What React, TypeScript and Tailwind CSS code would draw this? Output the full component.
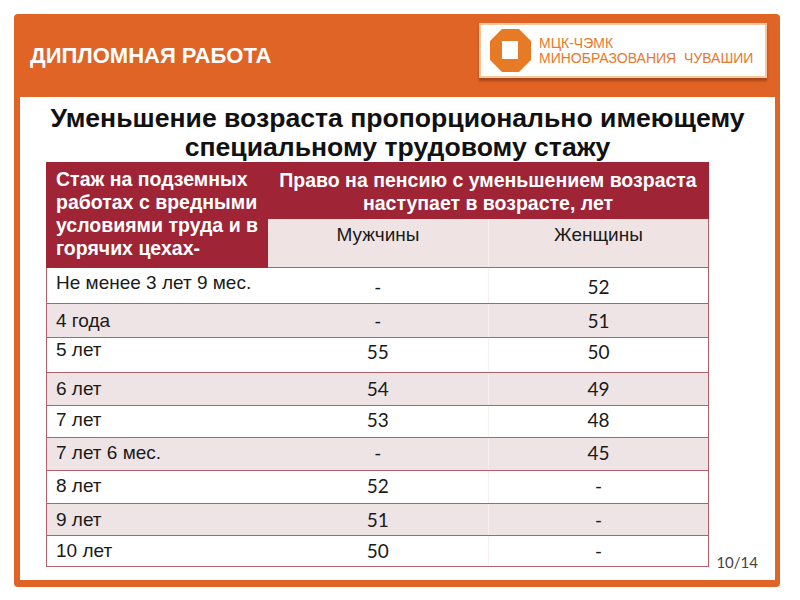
const rows: [string, string, string][] = [
  ["Не менее 3 лет 9 мес.", "-", "52"],
  ["4 года", "-", "51"],
  ["5 лет", "55", "50"],
  ["6 лет", "54", "49"],
  ["7 лет", "53", "48"],
  ["7 лет 6 мес.", "-", "45"],
  ["8 лет", "52", "-"],
  ["9 лет", "51", "-"],
  ["10 лет", "50", "-"],
];

const rowHeights = ["h-[36px]", "h-[34px]", "h-[35px]", "h-[33px]", "h-[32px]", "h-[33px]", "h-[33px]", "h-[32px]", "h-[31px]"];

// per-row vertical placement: [label cell, value cells]
const rowAlign: [string, string][] = [
  ["align-top pt-[4px]", "align-top pt-[8px]"],
  ["align-middle", "align-middle"],
  ["align-top pt-[1px]", "align-top pt-[3px]"],
  ["align-middle", "align-middle"],
  ["align-middle pb-[4px]", "align-middle pb-[4px]"],
  ["align-middle pb-[3px]", "align-middle pb-[3px]"],
  ["align-middle pb-[3px]", "align-middle pb-[3px]"],
  ["align-middle", "align-middle"],
  ["align-middle", "align-middle"],
];

function Logo() {
  return (
    <div className="mt-[9px] mr-[8px] flex h-[55px] w-[288px] items-center gap-[8px] border-2 border-[#f7c89c] bg-white pl-[9px] shadow-[0_3px_2px_#a9461a]">
      <svg width="41" height="43" viewBox="0 0 41 43">
        <polygon points="12,0 29,0 41,12 41,31 29,43 12,43 0,31 0,12" fill="#e77a24" />
        <rect x="12" y="12" width="16" height="18" fill="#fff" />
      </svg>
      <div className="font-['Liberation_Sans',sans-serif] text-[14px] leading-[15px] text-[#e7792a]">
        <div>МЦК-ЧЭМК</div>
        <div>МИНОБРАЗОВАНИЯ&nbsp;&nbsp;ЧУВАШИИ</div>
      </div>
    </div>
  );
}

export default function App() {
  return (
    <div className="h-[600px] w-[800px] bg-white pt-[14px] pl-[14px] font-['Liberation_Sans',Arial,sans-serif]">
      <div className="flex h-[573px] w-[766px] flex-col rounded-[4px] bg-[#df6426] pb-[7px] pl-[6px] pr-[5px]">
        <div className="flex h-[83px] shrink-0 items-start justify-between">
          <div className="mt-[29px] pl-[10px] text-[22px] font-bold leading-[26px] text-white">ДИПЛОМНАЯ РАБОТА</div>
          <Logo />
        </div>
        <div className="relative flex flex-1 flex-col bg-white">
          <h1 className="mt-[7px] text-center text-[26.6px] font-bold leading-[29px] text-[#111]">
            Уменьшение возраста пропорционально имеющему
            <br />
            специальному трудовому стажу
          </h1>
          <table className="ml-[26px] w-[662px] table-fixed border-collapse text-[#1a1a1a]">
            <colgroup>
              <col className="w-[221px]" />
              <col className="w-[221px]" />
              <col className="w-[220px]" />
            </colgroup>
            <thead>
              <tr className="h-[56px]">
                <th rowSpan={2} className="border border-[#9e2436] bg-[#9e2436] pl-[9px] pr-[4px] pb-[2px] text-left align-middle text-[19.5px] font-bold leading-[23px] text-white">
                  Стаж на подземных работах с вредными условиями труда и в горячих цехах-
                </th>
                <th colSpan={2} className="border border-[#9e2436] bg-[#9e2436] px-[4px] pt-[6px] text-center align-top text-[19.5px] font-bold leading-[23px] text-white">
                  Право на пенсию с уменьшением возраста наступает в возрасте, лет
                </th>
              </tr>
              <tr className="h-[49px]">
                <th className="border-b border-b-[#b3606b] border-r border-r-[#f8f0f0] bg-[#efe3e4] pt-[5px] align-top text-[19px] font-normal leading-[22px]">Мужчины</th>
                <th className="border-b border-r border-[#b3606b] bg-[#efe3e4] pt-[5px] align-top text-[19px] font-normal leading-[22px]">Женщины</th>
              </tr>
            </thead>
            <tbody>
              {rows.map(([label, men, women], i) => {
                const bg = i % 2 === 1 ? "bg-[#efe4e5]" : "bg-white";
                const [labelAlign, valueAlign] = rowAlign[i];
                return (
                  <tr key={label} className={`${rowHeights[i]} ${bg}`}>
                    <td className={`border-b border-l border-[#b3606b] pl-[9px] text-[19px] leading-[22px] ${labelAlign}`}>{label}</td>
                    <td className={`border-b border-b-[#b3606b] border-r border-r-[#f8f0f0] text-center font-['Lato',sans-serif] text-[19px] leading-[22px] ${valueAlign}`}>{men}</td>
                    <td className={`border-b border-r border-[#b3606b] text-center font-['Lato',sans-serif] text-[19px] leading-[22px] ${valueAlign}`}>{women}</td>
                  </tr>
                );
              })}
            </tbody>
          </table>
          <div className="absolute bottom-[9px] right-[17px] font-['Lato',sans-serif] text-[15px] leading-[18px] text-[#444]">10/14</div>
        </div>
      </div>
    </div>
  );
}
